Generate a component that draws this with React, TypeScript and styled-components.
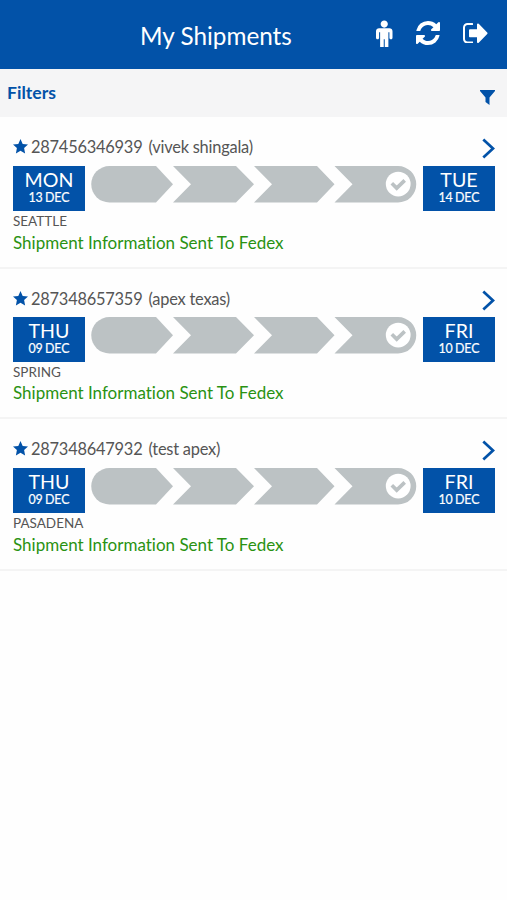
import React from "react";
import styled, { createGlobalStyle } from "styled-components";

const blue = "#0252a8";
const grey = "#bcc2c4";

const GlobalStyle = createGlobalStyle`
  * { box-sizing: border-box; }
  body {
    margin: 0;
    background: #fefefe;
    font-family: Lato, "Liberation Sans", sans-serif;
    font-variant-ligatures: none;
  }
`;

const Page = styled.div`
  min-height: 900px;
  width: 507px;
  overflow: hidden;
  background: #fefefe;
`;

const Header = styled.header`
  display: grid;
  grid-template-columns: 1fr 132px;
  height: 69px;
  background: ${blue};
  color: #fff;
`;

const Title = styled.h1`
  margin: 0;
  padding: 21px 0 0 140px;
  font-size: 24.3px;
  font-weight: 400;
  line-height: 30px;
  white-space: nowrap;
`;

const Actions = styled.div`
  display: flex;
  align-items: flex-start;
`;

const IconButton = styled.button<{ $left: number; $top: number }>`
  display: flex;
  flex: none;
  padding: 0;
  border: 0;
  background: none;
  color: inherit;
  margin: ${(p) => p.$top}px 0 0 ${(p) => p.$left}px;
`;

const FilterBar = styled.div`
  display: flex;
  justify-content: space-between;
  height: 48px;
  padding: 13px 12px 0 7px;
  background: #f5f5f6;
  color: ${blue};
`;

const FilterLabel = styled.span`
  font-size: 17.6px;
  font-weight: 700;
  line-height: 22px;
`;

const FilterIcon = styled.svg`
  margin-top: 8px;
`;

const Card = styled.section<{ $height: number }>`
  height: ${(p) => p.$height}px;
  padding: 19px 12px 0 13px;
  border-bottom: 2px solid #f4f4f4;
`;

const CardTop = styled.div<{ $height: number }>`
  display: flex;
  align-items: flex-start;
  height: ${(p) => p.$height}px;
`;

const Tracking = styled.div`
  display: flex;
  flex: 1;
  gap: 6px;
  margin-left: 3px;
  color: #555;
  font-size: 16.4px;
  letter-spacing: -0.22px;
  line-height: 22px;
`;

const Star = styled.svg`
  margin-top: 3px;
`;

const Chevron = styled.svg`
  margin-top: 2px;
`;

const Timeline = styled.div`
  display: flex;
  justify-content: space-between;
  height: 45px;
`;

const DateBox = styled.div`
  display: flex;
  flex-direction: column;
  align-items: center;
  width: 72px;
  height: 45px;
  padding-top: 2px;
  background: ${blue};
  color: #fff;
`;

const Day = styled.span`
  font-size: 19.6px;
  line-height: 23px;
`;

const DateText = styled.span`
  font-size: 12.4px;
  line-height: 14px;
  word-spacing: -1px;
  -webkit-text-stroke: 0.2px #fff;
`;

const City = styled.div`
  margin-top: 1px;
  color: #555;
  font-size: 13.5px;
  line-height: 18px;
`;

const Status = styled.div<{ $gap: number }>`
  margin-top: ${(p) => p.$gap}px;
  color: #2a9212;
  font-size: 17px;
  line-height: 22px;
`;

const shipments = [
  { id: "287456346939", name: "vivek shingala", from: ["MON", "13 DEC"], to: ["TUE", "14 DEC"], city: "SEATTLE", height: 152, top: 30, gap: 2 },
  { id: "287348657359", name: "apex texas", from: ["THU", "09 DEC"], to: ["FRI", "10 DEC"], city: "SPRING", height: 150, top: 29, gap: 1 },
  { id: "287348647932", name: "test apex", from: ["THU", "09 DEC"], to: ["FRI", "10 DEC"], city: "PASADENA", height: 152, top: 29.5, gap: 2.5 },
];

const Progress = () => (
  <svg width="326" height="37" viewBox="0 0 326 37">
    <g fill={grey}>
      <path d="M18.5 0H65l17 18.3L65 36.5H18.5a18.25 18.25 0 0 1 0-36.5z" />
      <path d="M82 0h63l18 18.3-18 18.2H82l18-18.2z" />
      <path d="M163 0h63l17.5 18.3-17.5 18.2H163l18-18.2z" />
      <path d="M243.5 0H307a18.25 18.25 0 0 1 0 36.5H243.5l18-18.2z" />
    </g>
    <circle cx="307.2" cy="18.1" r="12.4" fill="#fff" />
    <path d="M300.8 17.3l4.9 4.8 8-7.7" fill="none" stroke={grey} strokeWidth="3.7" />
  </svg>
);

export default function App() {
  return (
    <Page>
      <GlobalStyle />
      <Header>
        <Title>My Shipments</Title>
        <Actions>
          <IconButton $left={1} $top={20} aria-label="Profile">
            <svg width="16.5" height="26.5" viewBox="0 128 1024 1664" preserveAspectRatio="none" fill="currentColor">
              <path d="M1024 832v416q0 40-28 68t-68 28-68-28-28-68v-352h-64v912q0 46-33 79t-79 33-79-33-33-79v-464h-64v464q0 46-33 79t-79 33-79-33-33-79v-912h-64v352q0 40-28 68t-68 28-68-28-28-68v-416q0-80 56-136t136-56h640q80 0 136 56t56 136zm-288-448q0 93-65.5 158.5t-158.5 65.5-158.5-65.5-65.5-158.5 65.5-158.5 158.5-65.5 158.5 65.5 65.5 158.5z" />
            </svg>
          </IconButton>
          <IconButton $left={23.5} $top={21} aria-label="Refresh">
            <svg width="24" height="24" viewBox="0 128 1536 1536" fill="currentColor">
              <path d="M1511 1056q0 5-1 7-64 268-268 434.5t-478 166.5q-146 0-282.5-55t-243.5-157l-129 129q-19 19-45 19t-45-19-19-45v-448q0-26 19-45t45-19h448q26 0 45 19t19 45-19 45l-137 137q71 66 161 102t187 36q134 0 250-65t186-179q11-17 53-117 8-23 30-23h192q13 0 22.5 9.5t9.5 22.5zm25-800v448q0 26-19 45t-45 19h-448q-26 0-45-19t-19-45 19-45l138-138q-148-137-349-137-134 0-250 65t-186 179q-11 17-53 117-8 23-30 23h-199q-13 0-22.5-9.5t-9.5-22.5v-7q65-268 270-434.5t480-166.5q146 0 284 55.5t245 156.5l130-129q19-19 45-19t45 19 19 45z" />
            </svg>
          </IconButton>
          <IconButton $left={23} $top={22.5} aria-label="Sign out">
            <svg width="24.5" height="20.5" viewBox="0 256 1568 1280" preserveAspectRatio="none" fill="currentColor">
              <path d="M640 1440q0 4 1 20t.5 26.5-3 23.5-10 19.5-20.5 6.5h-320q-119 0-203.5-84.5t-84.5-203.5v-704q0-119 84.5-203.5t203.5-84.5h320q13 0 22.5 9.5t9.5 22.5q0 4 1 20t.5 26.5-3 23.5-10 19.5-20.5 6.5h-320q-66 0-113 47t-47 113v704q0 66 47 113t113 47h312l11.5 1 11.5 3 8 5.5 7 9 2 13.5zm928-544q0 26-19 45l-544 544q-19 19-45 19t-45-19-19-45v-288h-448q-26 0-45-19t-19-45v-384q0-26 19-45t45-19h448v-288q0-26 19-45t45-19 45 19l544 544q19 19 19 45z" />
            </svg>
          </IconButton>
        </Actions>
      </Header>
      <FilterBar>
        <FilterLabel>Filters</FilterLabel>
        <FilterIcon width="15" height="15" viewBox="0 0 15 15" fill="currentColor">
          <path d="M0 0h15v1L9.5 7.5V15L5.5 12V7.5L0 1z" />
        </FilterIcon>
      </FilterBar>
      {shipments.map((s) => (
        <Card key={s.id} $height={s.height}>
          <CardTop $height={s.top}>
            <Star width="15" height="15" viewBox="0 0 15 15" fill={blue}>
              <path d="M7.5 0l2.2 4.9 5.3.6-3.9 3.6 1 5.3-4.6-2.6-4.6 2.6 1-5.3L0 5.5l5.3-.6z" />
            </Star>
            <Tracking>
              <span>{s.id}</span>
              <span>({s.name})</span>
            </Tracking>
            <Chevron width="13" height="21" viewBox="0 0 13 21" fill="none" stroke={blue} strokeWidth="2.7">
              <path d="M1.3 1.5L11 10.5l-9.7 9" />
            </Chevron>
          </CardTop>
          <Timeline>
            <DateBox>
              <Day>{s.from[0]}</Day>
              <DateText>{s.from[1]}</DateText>
            </DateBox>
            <Progress />
            <DateBox>
              <Day>{s.to[0]}</Day>
              <DateText>{s.to[1]}</DateText>
            </DateBox>
          </Timeline>
          <City>{s.city}</City>
          <Status $gap={s.gap}>Shipment Information Sent To Fedex</Status>
        </Card>
      ))}
    </Page>
  );
}
